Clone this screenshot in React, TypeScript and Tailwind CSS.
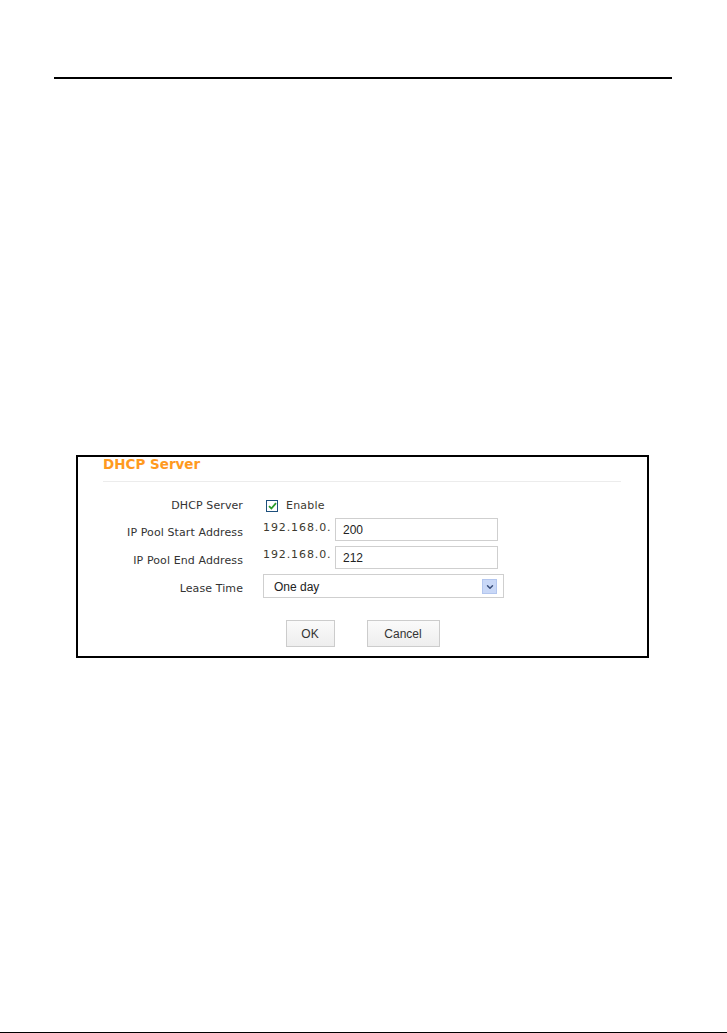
import { ChevronDown } from "lucide-react";

const labelFont = { fontFamily: '"DejaVu Sans", Verdana, sans-serif' };
const arialFont = { fontFamily: '"Liberation Sans", Arial, sans-serif' };

const Label = ({ text, offset = "" }: { text: string; offset?: string }) => (
  <div
    className={`flex items-center justify-end text-[11px] tracking-[0.1px] text-[#333] ${offset}`}
    style={labelFont}
  >
    {text}
  </div>
);

const IpRow = ({ value }: { value: string }) => (
  <div className="flex items-center h-[23px]">
    <span
      className="text-[11px] tracking-[0.9px] text-[#3d3a30] w-[72px] pb-[3px]"
      style={labelFont}
    >
      192.168.0.
    </span>
    <div
      className="w-[163px] h-[23px] border border-[#cfcfcf] bg-white flex items-center pl-[7px] pt-px text-[12px] text-[#222]"
      style={arialFont}
    >
      {value}
    </div>
  </div>
);

const App = () => {
  return (
    <div className="w-[727px] h-[1033px] bg-white flex flex-col">
      <div className="mt-[77px] ml-[54px] w-[618px] h-[2px] bg-black" />

      <div className="mt-[376px] ml-[76px] w-[573px] h-[203px] border-2 border-black flex flex-col">
        <div
          className="pl-[25px] h-[24px] text-[13.5px] leading-[15px] font-bold text-[#ff9a1f]"
          style={labelFont}
        >
          DHCP Server
        </div>
        <div className="ml-[25px] w-[518px] h-px bg-[#ececec]" />

        <div className="mt-[14px] grid grid-cols-[165px_1fr] gap-x-[20px]">
          <Label text="DHCP Server" />
          <div className="flex items-center h-[20px] pl-[3px]">
            <div className="w-[12px] h-[12px] border border-[#1d4f7c] bg-white flex items-center justify-center">
              <svg width="9" height="8" viewBox="0 0 9 8">
                <path d="M1 4.2 L3.4 6.5 L8 1.2" fill="none" stroke="#2a9d2a" strokeWidth="1.8" />
              </svg>
            </div>
            <span className="ml-[8px] text-[11px] text-[#3d3a30] tracking-[0.2px]" style={labelFont}>
              Enable
            </span>
          </div>

          <Label text="IP Pool Start Address" offset="mt-[2px] pt-[7px]" />
          <div className="mt-[2px]">
            <IpRow value="200" />
          </div>

          <Label text="IP Pool End Address" offset="mt-[4px] pt-[7px]" />
          <div className="mt-[4px]">
            <IpRow value="212" />
          </div>

          <Label text="Lease Time" offset="mt-[5px] pt-[6px]" />
          <div className="mt-[5px]">
            <div
              className="w-[241px] h-[24px] border border-[#cfcfcf] bg-white flex items-center justify-between pl-[10px] pr-[6px] pt-px text-[12px] text-[#222]"
              style={arialFont}
            >
              <span>One day</span>
              <div className="w-[15px] h-[15px] bg-[#c9d8f7] border border-[#b3c6ee] flex items-center justify-center">
                <ChevronDown size={10} strokeWidth={3.5} color="#3a4f7a" />
              </div>
            </div>
          </div>
        </div>

        <div className="mt-[22px] flex justify-center gap-[32px]">
          <button
            className="w-[49px] h-[27px] border border-[#cccccc] bg-gradient-to-b from-[#fafafa] to-[#eeeeee] pt-px text-[12px] text-[#333]"
            style={arialFont}
          >
            OK
          </button>
          <button
            className="w-[73px] h-[27px] border border-[#cccccc] bg-gradient-to-b from-[#fafafa] to-[#eeeeee] pt-px text-[12px] text-[#333]"
            style={arialFont}
          >
            Cancel
          </button>
        </div>
      </div>

      <div className="mt-auto h-px bg-black" />
    </div>
  );
};

export default App;
